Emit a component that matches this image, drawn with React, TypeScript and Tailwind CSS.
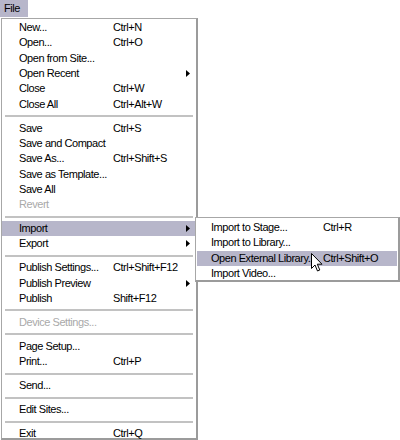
import React from "react";

type Item =
  | { kind: "sep" }
  | {
      kind: "item";
      label: string;
      shortcut?: string;
      sub?: boolean;
      disabled?: boolean;
      active?: boolean;
    };

const it = (
  label: string,
  shortcut?: string,
  opts: { sub?: boolean; disabled?: boolean; active?: boolean } = {}
): Item => ({ kind: "item", label, shortcut, ...opts });
const sep: Item = { kind: "sep" };

const fileMenu: Item[] = [
  it("New...", "Ctrl+N"),
  it("Open...", "Ctrl+O"),
  it("Open from Site..."),
  it("Open Recent", undefined, { sub: true }),
  it("Close", "Ctrl+W"),
  it("Close All", "Ctrl+Alt+W"),
  sep,
  it("Save", "Ctrl+S"),
  it("Save and Compact"),
  it("Save As...", "Ctrl+Shift+S"),
  it("Save as Template..."),
  it("Save All"),
  it("Revert", undefined, { disabled: true }),
  sep,
  it("Import", undefined, { sub: true, active: true }),
  it("Export", undefined, { sub: true }),
  sep,
  it("Publish Settings...", "Ctrl+Shift+F12"),
  it("Publish Preview", undefined, { sub: true }),
  it("Publish", "Shift+F12"),
  sep,
  it("Device Settings...", undefined, { disabled: true }),
  sep,
  it("Page Setup..."),
  it("Print...", "Ctrl+P"),
  sep,
  it("Send..."),
  sep,
  it("Edit Sites..."),
  sep,
  it("Exit", "Ctrl+Q"),
];

const importMenu: Item[] = [
  it("Import to Stage...", "Ctrl+R"),
  it("Import to Library..."),
  it("Open External Library...", "Ctrl+Shift+O", { active: true }),
  it("Import Video..."),
];

function Arrow() {
  return (
    <svg width="4" height="7" viewBox="0 0 4 7" className="block">
      <path d="M0 0 L4 3.5 L0 7 Z" fill="#000" />
    </svg>
  );
}

function Row({
  item,
  labelW,
  indent,
}: {
  item: Extract<Item, { kind: "item" }>;
  labelW: string;
  indent: string;
}) {
  return (
    <div
      className={`flex items-center h-[15.3px] ${indent} ${
        item.active ? "bg-[#b7b6ca]" : ""
      } ${item.disabled ? "text-[#a9a9a9]" : "text-black"}`}
    >
      <span className={`${labelW} shrink-0 whitespace-nowrap`}>{item.label}</span>
      <span className="flex-1 whitespace-nowrap">{item.shortcut ?? ""}</span>
      <span className="w-[8px] flex justify-start">{item.sub ? <Arrow /> : null}</span>
    </div>
  );
}

function Separator({ inset }: { inset: string }) {
  return (
    <div className={`h-[8.7px] flex items-center ${inset}`}>
      <div className="h-[2px] w-full bg-[#c2c2c2]" />
    </div>
  );
}

function Cursor() {
  return (
    <svg width="12" height="19" viewBox="0 0 12 19" className="block">
      <path
        d="M0.5 0.5 L0.5 15.5 L4 12 L6.5 18 L8.8 17 L6.3 11.2 L11 11.2 Z"
        fill="#fff"
        stroke="#000"
        strokeWidth="1"
        strokeLinejoin="miter"
      />
    </svg>
  );
}

export default function App() {
  return (
    <div
      className="relative w-[400px] h-[440px] bg-white overflow-hidden text-[11px] leading-[15px] tracking-[-0.45px]"
      style={{ fontFamily: '"Liberation Sans", Arial, sans-serif' }}
    >
      {/* menu bar */}
      <div className="h-[18px] flex items-start">
        <span className="h-[17px] w-[28px] pl-[4px] pt-[1px] bg-[#b7b6ca] text-black">File</span>
      </div>

      {/* File dropdown */}
      <div className="ml-[1px] w-[197px] h-[422px] border border-[#a7a7a7] border-r-[2px] border-r-[#9b9b9b] border-b-[2px] border-b-[#9b9b9b] bg-white pt-[1px]">
        {fileMenu.map((item, i) =>
          item.kind === "sep" ? (
            <Separator key={i} inset="px-[3px]" />
          ) : (
            <Row key={i} item={item} labelW="w-[94px]" indent="pl-[17px] pr-[2px]" />
          )
        )}
      </div>

      {/* Import submenu */}
      <div className="absolute left-[195px] top-[217px] w-[205px] h-[65px] border border-[#a7a7a7] border-r-[2px] border-r-[#9b9b9b] border-b-[2px] border-b-[#9b9b9b] bg-white pt-[2px] px-[1px]">
        {importMenu.map((item, i) =>
          item.kind === "sep" ? null : (
            <Row key={i} item={item} labelW="w-[112px]" indent="pl-[14px]" />
          )
        )}
      </div>

      {/* mouse pointer */}
      <div className="absolute left-[311px] top-[253px]">
        <Cursor />
      </div>
    </div>
  );
}
